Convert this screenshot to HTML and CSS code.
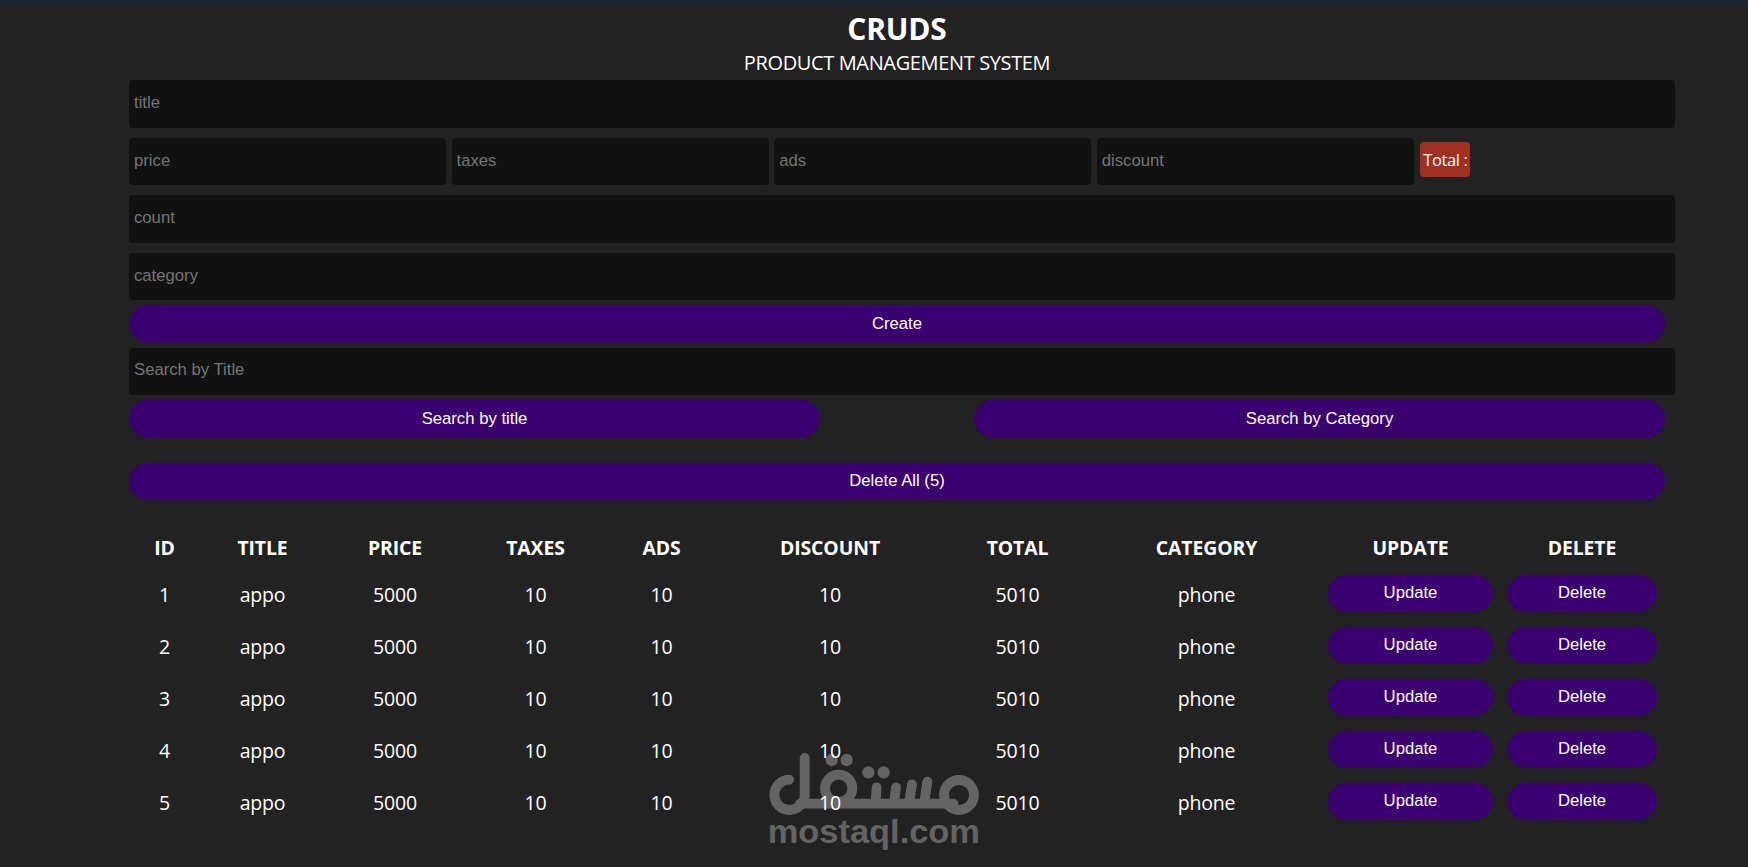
FILE: index.html
```html
<!DOCTYPE html>
<html lang="en">
<head>
<meta charset="utf-8">
<title>CRUDS</title>
<link rel="stylesheet" href="styles.css">
</head>
<body>
<div class="topbar"></div>
<main class="crud">
  <header class="head">
    <h1>CRUDS</h1>
    <p>PRODUCT MANAGEMENT SYSTEM</p>
  </header>
  <section class="inputs">
    <input class="field" placeholder="title">
    <div class="price">
      <input class="field" placeholder="price">
      <input class="field" placeholder="taxes">
      <input class="field" placeholder="ads">
      <input class="field" placeholder="discount">
      <small class="total"><span>Total :</span></small>
    </div>
    <input class="field" placeholder="count">
    <input class="field" placeholder="category">
  </section>
  <button class="btn create">Create</button>
  <section class="search">
    <input class="field" placeholder="Search by Title">
    <div class="search-buttons">
      <button class="btn">Search by title</button>
      <button class="btn">Search by Category</button>
    </div>
  </section>
  <button class="btn delete-all">Delete All (5)</button>
  <table class="products">
    <colgroup>
      <col class="c-id"><col class="c-title"><col class="c-price"><col class="c-taxes"><col class="c-ads">
      <col class="c-discount"><col class="c-total"><col class="c-category"><col class="c-update"><col class="c-delete">
    </colgroup>
    <thead>
      <tr><th>ID</th><th>TITLE</th><th>PRICE</th><th>TAXES</th><th>ADS</th><th>DISCOUNT</th><th>TOTAL</th><th>CATEGORY</th><th>UPDATE</th><th>DELETE</th></tr>
    </thead>
    <tbody>
      <tr><td>1</td><td>appo</td><td>5000</td><td>10</td><td>10</td><td>10</td><td>5010</td><td>phone</td><td><button class="btn">Update</button></td><td><button class="btn">Delete</button></td></tr>
      <tr><td>2</td><td>appo</td><td>5000</td><td>10</td><td>10</td><td>10</td><td>5010</td><td>phone</td><td><button class="btn">Update</button></td><td><button class="btn">Delete</button></td></tr>
      <tr><td>3</td><td>appo</td><td>5000</td><td>10</td><td>10</td><td>10</td><td>5010</td><td>phone</td><td><button class="btn">Update</button></td><td><button class="btn">Delete</button></td></tr>
      <tr><td>4</td><td>appo</td><td>5000</td><td>10</td><td>10</td><td>10</td><td>5010</td><td>phone</td><td><button class="btn">Update</button></td><td><button class="btn">Delete</button></td></tr>
      <tr><td>5</td><td>appo</td><td>5000</td><td>10</td><td>10</td><td>10</td><td>5010</td><td>phone</td><td><button class="btn">Update</button></td><td><button class="btn">Delete</button></td></tr>
    </tbody>
  </table>
</main>
<svg class="watermark" viewBox="0 0 810 411" aria-label="mostaql.com">
  <g class="wm-lines">
    <path d="M147 149A45.500 45.500 0 1 0 194 195V84"/>
    <path d="M180 221H640"/>
    <circle cx="296" cy="175" r="41"/>
    <path d="M410 172L407 215M468 172L462 215M516 163L508 215M562 155L553 215"/>
    <circle cx="657" cy="195" r="45"/>
  </g>
  <g class="wm-fill">
    <circle cx="275" cy="90" r="18.500"/>
    <circle cx="320" cy="90" r="18.500"/>
    <circle cx="385" cy="127" r="18.500"/>
    <circle cx="431" cy="127" r="18.500"/>
    <text x="83" y="338" textLength="637" lengthAdjust="spacingAndGlyphs">mostaql.com</text>
  </g>
</svg>
</body>
</html>
```

FILE: styles.css
```css
* { box-sizing: border-box; }

body {
  margin: 0;
  height: 867px;
  overflow: hidden;
  background: #222;
  color: #fff;
  font-family: "Segoe UI", "Open Sans", "Noto Sans", sans-serif;
}

.topbar { height: 8px; background: #20242d; }

.crud { width: 1536px; margin-left: 129px; }

.head { height: 72px; text-align: center; }
.head h1 { margin: 0; padding-top: 2px; font-size: 30px; line-height: 38px; letter-spacing: -0.2px; }
.head p { margin: 0; padding-top: 1px; font-size: 20px; line-height: 28px; letter-spacing: -0.36px; }

.inputs { display: flex; flex-direction: column; gap: 10px; width: 1546px; }

.field {
  display: block;
  width: 100%;
  height: 47.500px;
  padding: 0 5px 1px;
  border: 0;
  border-radius: 4px;
  outline: none;
  background: #111;
  color: #fff;
  font: 16.700px "Liberation Sans", Arial, sans-serif;
}
.field::placeholder { color: #757575; opacity: 1; }

.price { display: flex; align-items: center; gap: 5.400px; }
.price .field { width: 317.200px; }

.total {
  display: flex;
  align-items: center;
  justify-content: center;
  width: 50px;
  height: 35px;
  margin: -4px 0 0 1px;
  border-radius: 4px;
  background: #a03020;
  font-size: 16.500px;
  letter-spacing: -0.4px;
  white-space: nowrap;
}

.btn {
  display: block;
  width: 100%;
  height: 38px;
  padding: 0 0 1px;
  border: 0;
  border-radius: 20px;
  background: #3a006f;
  color: #fff;
  font: 16.700px "Liberation Sans", Arial, sans-serif;
}

.create { margin: 5px 0 4.500px; }

.search .field { width: 1546px; padding-bottom: 2px; }
.search-buttons { display: flex; justify-content: space-between; margin-top: 5px; }
.search-buttons .btn { width: 691px; }

.delete-all { height: 37px; margin: 25px 0 22px; padding-bottom: 2px; }

.products { width: 1535px; table-layout: fixed; border-collapse: collapse; text-align: center; font-size: 19.500px; }
.products th, .products td { padding: 0; }
.products th { height: 47px; padding-top: 4px; line-height: 26px; font-size: 19.400px; letter-spacing: -0.1px; }
.products td { height: 52px; padding-bottom: 2px; letter-spacing: -0.2px; }
.products td .btn { height: 37px; width: calc(100% - 14px); margin: 0 auto 1px; letter-spacing: 0; }

.c-id { width: 71px; }
.c-title { width: 125px; }
.c-price { width: 140px; }
.c-taxes { width: 141px; }
.c-ads { width: 111px; }
.c-discount { width: 226px; }
.c-total { width: 149px; }
.c-category { width: 229px; }
.c-update { width: 179px; }
.c-delete { width: 164px; }

.watermark { position: absolute; left: 740px; top: 730px; z-index: -1; width: 270px; height: 137px; }
.wm-lines { fill: none; stroke: #646464; stroke-width: 29.500px; stroke-linecap: round; stroke-linejoin: round; }
.wm-fill { fill: #646464; }
.wm-fill text { font: bold 102px "Liberation Sans", Arial, sans-serif; }
```
